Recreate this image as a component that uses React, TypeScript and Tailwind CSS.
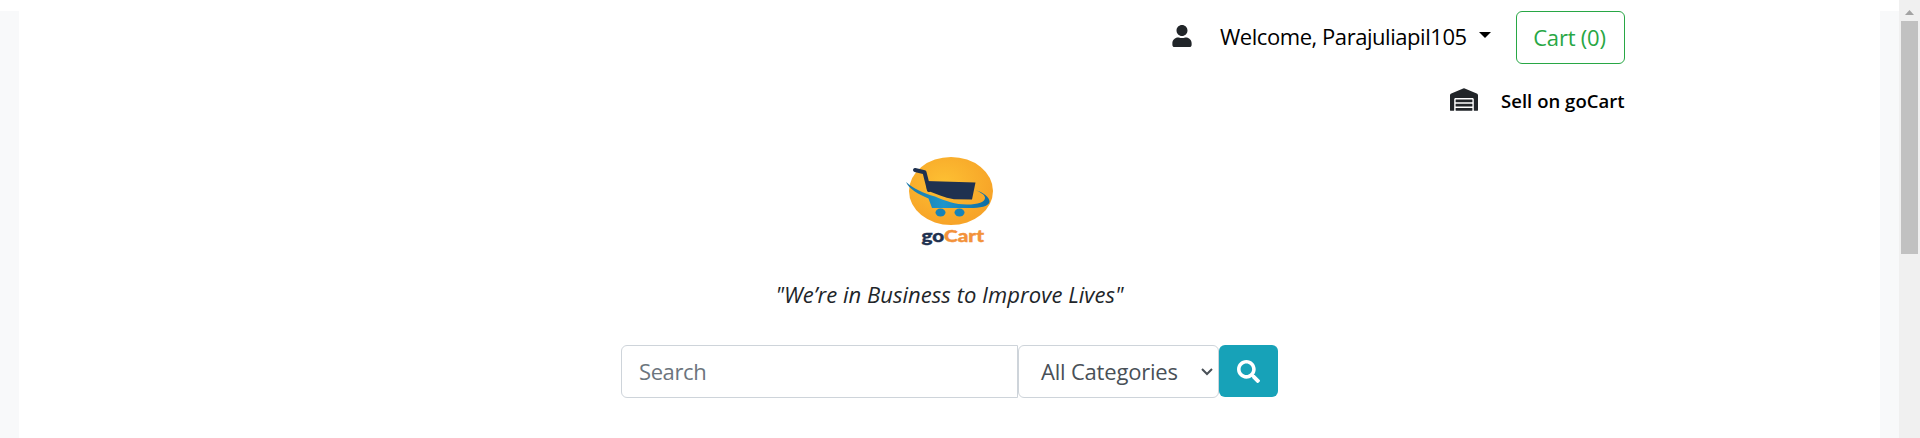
import React from "react";
import { FaUser, FaWarehouse, FaSearch } from "react-icons/fa";

function Logo() {
  return (
    <svg width="88" height="94" viewBox="0 0 88 94" className="block">
      <defs>
        <radialGradient id="sun" cx="0.42" cy="0.38" r="0.6">
          <stop offset="0" stopColor="#fdc033" />
          <stop offset="1" stopColor="#f7a428" />
        </radialGradient>
        <linearGradient id="swoosh" x1="0" x2="1">
          <stop offset="0" stopColor="#1678ac" />
          <stop offset="0.45" stopColor="#1e95cb" />
          <stop offset="1" stopColor="#0f6ca3" />
        </linearGradient>
      </defs>
      <ellipse cx="45" cy="36" rx="42" ry="34" fill="url(#sun)" />
      <path d="M9 15 L18.500 17.300 L23 35" fill="none" stroke="#1f3150" strokeWidth="4" strokeLinecap="round" strokeLinejoin="round" />
      <path d="M20 26 L69.500 27.500 L66 44.500 L48 44.300 C38 42.500 30 39 21 35.500 Z" fill="#1f3150" />
      <path
        d="M0 27 C8 34 17 38 29 41.500 C40 46 49 49.500 61 49.500 C72 49.500 79.500 47 79 42.500 C78.600 39.500 74 37 69 35 C77 37 84 42.500 83.500 47 C82.500 52 72 53.300 61 53 L26 53 L22.500 43.500 C12 39 3 34 0 27 Z"
        fill="url(#swoosh)"
      />
      <ellipse cx="34.500" cy="57.500" rx="5" ry="4" fill="#1783b8" />
      <ellipse cx="53.500" cy="57.500" rx="5" ry="4" fill="#1783b8" />
      <text
        x="15.500"
        y="86.500"
        fontFamily="Lato, sans-serif"
        fontWeight="900"
        fontSize="16"
        textLength="62.500"
        lengthAdjust="spacingAndGlyphs"
        fill="#1f3150"
        stroke="#1f3150"
        strokeWidth="0.4"
      >
        go<tspan fill="#f3923a" stroke="#f3923a">Cart</tspan>
      </text>
    </svg>
  );
}

function Scrollbar() {
  return (
    <div className="flex h-full w-[21px] flex-col items-center bg-[#f0f0f0]">
      <div className="flex h-[21px] items-center pt-[3px]">
        <svg width="9" height="5" viewBox="0 0 9 5">
          <path d="M0 5 L4.500 0 L9 5 Z" fill="#a3a3a3" />
        </svg>
      </div>
      <div className="h-[233px] w-[17px] bg-[#c1c1c1]" />
    </div>
  );
}

export default function App() {
  return (
    <div className="flex h-[438px] w-full overflow-hidden bg-white font-['Open_Sans',sans-serif] text-[#212529]">
      <div className="flex flex-1 bg-[#f8f9fa] px-[19px]">
        <div className="-mx-[19px] flex flex-1 border-t-[11px] border-white px-[19px]">
          <div className="flex flex-1 flex-col bg-white">
            <div className="flex h-[53px] items-start justify-end pr-[255px]">
              <FaUser className="mt-[14px] h-[22px] w-[20px]" />
              <a className="ml-[28px] mt-[8px] block w-[246px] whitespace-nowrap text-[22px] leading-[34px] tracking-[-0.450px] text-black">
                Welcome, Parajuliapil105
              </a>
              <span className="ml-[13px] mt-[21px] block border-x-[6.500px] border-t-[6.500px] border-x-transparent border-t-black" />
              <button className="ml-[25px] h-[53px] w-[109px] whitespace-nowrap rounded-[6px] border border-[#28a745] text-[22px] tracking-[-0.200px] text-[#28a745]">
                <span className="relative -left-px">Cart (0)</span>
              </button>
            </div>
            <div className="mt-[18px] flex h-[34px] items-center justify-end pr-[255px]">
              <FaWarehouse className="h-[23px] w-[28px]" />
              <a className="ml-[23px] block w-[124px] whitespace-nowrap pt-[4px] text-[18.500px] font-semibold leading-[28px] tracking-[0.040px] text-black">
                Sell on goCart
              </a>
            </div>
            <div className="mt-[39px] flex justify-center">
              <Logo />
            </div>
            <p className="mt-[27px] whitespace-nowrap text-center text-[22px] italic leading-[36px] tracking-[0.040px]">
              "We’re in Business to Improve Lives"
            </p>
            <form className="mt-[33px] flex items-start justify-center">
              <input
                placeholder="Search"
                className="h-[53px] w-[397px] rounded-l-[6px] border border-[#ced4da] px-[17px] pb-[2px] text-[22px] tracking-[-0.400px] text-[#495057] outline-none placeholder:text-[#6c757d]"
              />
              <div className="flex h-[53px] w-[201px] items-center justify-between rounded-[6px] border border-[#ced4da] pl-[22px] pr-[5px] text-[22px] tracking-[-0.200px] text-[#495057]">
                <span className="whitespace-nowrap">All Categories</span>
                <svg width="12" height="8" viewBox="0 0 12 8" fill="none" stroke="#495057" strokeWidth="2">
                  <path d="M1 1 L6 6 L11 1" />
                </svg>
              </div>
              <button type="button" className="flex h-[52px] w-[59px] items-center justify-center rounded-[6px] bg-[#17a2b8] text-white">
                <FaSearch className="h-[23px] w-[23px]" />
              </button>
            </form>
          </div>
        </div>
      </div>
      <Scrollbar />
    </div>
  );
}
